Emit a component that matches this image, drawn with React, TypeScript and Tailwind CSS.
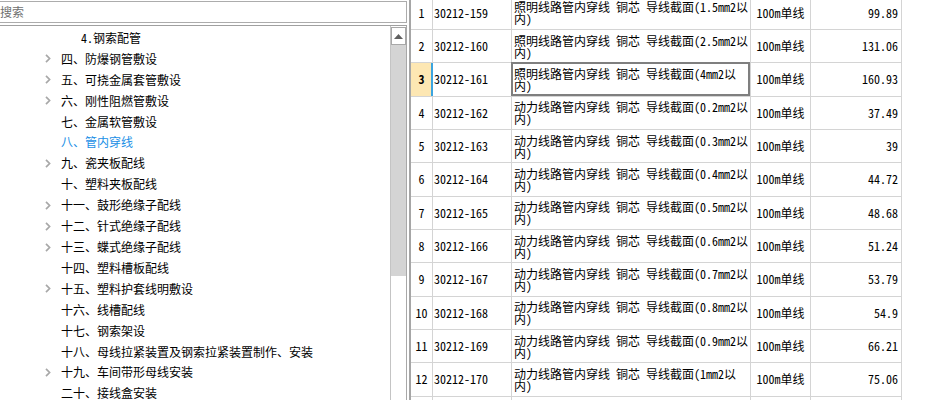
import React from 'react';

type Row = { n: number; code: string; name: string; price: string };

const rows: Row[] = [
  { n: 1, code: '30212-159', name: '照明线路管内穿线 铜芯 导线截面(1.5mm2以', price: '99.89' },
  { n: 2, code: '30212-160', name: '照明线路管内穿线 铜芯 导线截面(2.5mm2以', price: '131.06' },
  { n: 3, code: '30212-161', name: '照明线路管内穿线 铜芯 导线截面(4mm2以', price: '160.93' },
  { n: 4, code: '30212-162', name: '动力线路管内穿线 铜芯 导线截面(0.2mm2以', price: '37.49' },
  { n: 5, code: '30212-163', name: '动力线路管内穿线 铜芯 导线截面(0.3mm2以', price: '39' },
  { n: 6, code: '30212-164', name: '动力线路管内穿线 铜芯 导线截面(0.4mm2以', price: '44.72' },
  { n: 7, code: '30212-165', name: '动力线路管内穿线 铜芯 导线截面(0.5mm2以', price: '48.68' },
  { n: 8, code: '30212-166', name: '动力线路管内穿线 铜芯 导线截面(0.6mm2以', price: '51.24' },
  { n: 9, code: '30212-167', name: '动力线路管内穿线 铜芯 导线截面(0.7mm2以', price: '53.79' },
  { n: 10, code: '30212-168', name: '动力线路管内穿线 铜芯 导线截面(0.8mm2以', price: '54.9' },
  { n: 11, code: '30212-169', name: '动力线路管内穿线 铜芯 导线截面(0.9mm2以', price: '66.21' },
  { n: 12, code: '30212-170', name: '动力线路管内穿线 铜芯 导线截面(1mm2以', price: '75.06' },
  { n: 13, code: '30212-171', name: '动力线路管内穿线 铜芯 导线截面(1.5mm2以', price: '83.12' },
];

type TreeItem = { text: string; level: number; arrow?: boolean; active?: boolean };

const tree: TreeItem[] = [
  { text: '4.钢索配管', level: 2 },
  { text: '四、防爆钢管敷设', level: 1, arrow: true },
  { text: '五、可挠金属套管敷设', level: 1, arrow: true },
  { text: '六、刚性阻燃管敷设', level: 1, arrow: true },
  { text: '七、金属软管敷设', level: 1 },
  { text: '八、管内穿线', level: 1, active: true },
  { text: '九、瓷夹板配线', level: 1, arrow: true },
  { text: '十、塑料夹板配线', level: 1 },
  { text: '十一、鼓形绝缘子配线', level: 1, arrow: true },
  { text: '十二、针式绝缘子配线', level: 1, arrow: true },
  { text: '十三、蝶式绝缘子配线', level: 1, arrow: true },
  { text: '十四、塑料槽板配线', level: 1 },
  { text: '十五、塑料护套线明敷设', level: 1, arrow: true },
  { text: '十六、线槽配线', level: 1 },
  { text: '十七、钢索架设', level: 1 },
  { text: '十八、母线拉紧装置及钢索拉紧装置制作、安装', level: 1 },
  { text: '十九、车间带形母线安装', level: 1, arrow: true },
  { text: '二十、接线盒安装', level: 1 },
];

function Chevron() {
  return (
    <svg width="6" height="9" viewBox="0 0 6 9" className="block">
      <path d="M1 0.8 L4.6 4.5 L1 8.2" fill="none" stroke="#a8a8a8" strokeWidth="1.7" />
    </svg>
  );
}

export default function App() {
  return (
    <div className="flex w-[928px] h-[400px] overflow-hidden bg-white text-[12px] text-black font-['Noto_Sans_Mono_CJK_SC','Noto_Sans_CJK_SC',sans-serif]">
      {/* Left panel */}
      <div className="w-[407px] shrink-0 flex flex-col">
        <div className="h-[25px] shrink-0 pt-px">
          <div className="h-[22px] -ml-[2px] border border-[#acacac] flex items-center pl-[1px] text-[#707070] text-[12px] leading-none">
            搜索
          </div>
        </div>
        <div className="flex-1 min-h-0 flex border-t border-[#a0a0a0]">
          <div className="flex-1 pt-[1.5px] overflow-hidden">
            {tree.map((t, i) => (
              <div key={i} className="h-[20.92px] flex items-center whitespace-nowrap leading-none">
                <div className={t.level === 2 ? 'w-[81px] shrink-0' : 'w-[45px] shrink-0'} />
                {t.level === 1 && (
                  <div className="w-[16px] shrink-0 flex items-center">{t.arrow && <Chevron />}</div>
                )}
                <span className={t.active ? 'text-[#1a8fe6]' : 'text-black'}>{t.text}</span>
              </div>
            ))}
          </div>
          <div className="w-[17px] shrink-0 flex flex-col border-l border-[#c4c4c4] border-r border-r-[#a8a8a8]">
            <div className="h-[18px] shrink-0 mt-px border border-[#a8a8a8] bg-white flex items-center justify-center">
              <svg width="9" height="5" viewBox="0 0 9 5" className="block">
                <path d="M0 5 L4.5 0 L9 5 Z" fill="#606060" />
              </svg>
            </div>
            <div className="h-[231px] shrink-0 bg-[#d4d4d4]" />
            <div className="flex-1 bg-white" />
          </div>
        </div>
      </div>

      {/* Splitter */}
      <div className="w-[2px] shrink-0 bg-white" />
      <div className="w-[2px] shrink-0 bg-[#a6a6a6]" />

      {/* Table */}
      <div className="flex-1 overflow-hidden">
        <div className="-mt-[3.333px]">
          {rows.map((r) => {
            const sel = r.n === 3;
            return (
              <div key={r.n} className="flex h-[33.333px] w-[491px] border-b border-[#d4d4d4]">
                <div
                  className={
                    'w-[22px] shrink-0 flex items-center justify-center border-r border-[#d4d4d4] ' +
                    (sel ? 'bg-[#fde7b3] font-bold' : '')
                  }
                >
                  {r.n}
                </div>
                <div className="relative w-[79px] shrink-0 flex items-center pl-[1px] border-r border-[#d4d4d4] whitespace-nowrap">
                  {sel && <span className="absolute -left-[2px] top-0 bottom-0 w-[2px] bg-[#3ba4e0]" />}
                  {r.code}
                </div>
                <div className="relative w-[239px] shrink-0 flex flex-col justify-center pl-[2px] pt-[1px] border-r border-[#d4d4d4] leading-[12px] whitespace-nowrap">
                  {sel && <span className="absolute -left-[1px] -top-[1px] right-0 bottom-0 border-2 border-[#7f7f7f]" />}
                  <div>{r.name}</div>
                  <div>内)</div>
                </div>
                <div className="w-[60px] shrink-0 flex items-center justify-center border-r border-[#d4d4d4] whitespace-nowrap">
                  100m单线
                </div>
                <div className="w-[91px] shrink-0 flex items-center justify-end pr-[3px] border-r border-[#d4d4d4]">
                  {r.price}
                </div>
              </div>
            );
          })}
        </div>
      </div>
    </div>
  );
}
